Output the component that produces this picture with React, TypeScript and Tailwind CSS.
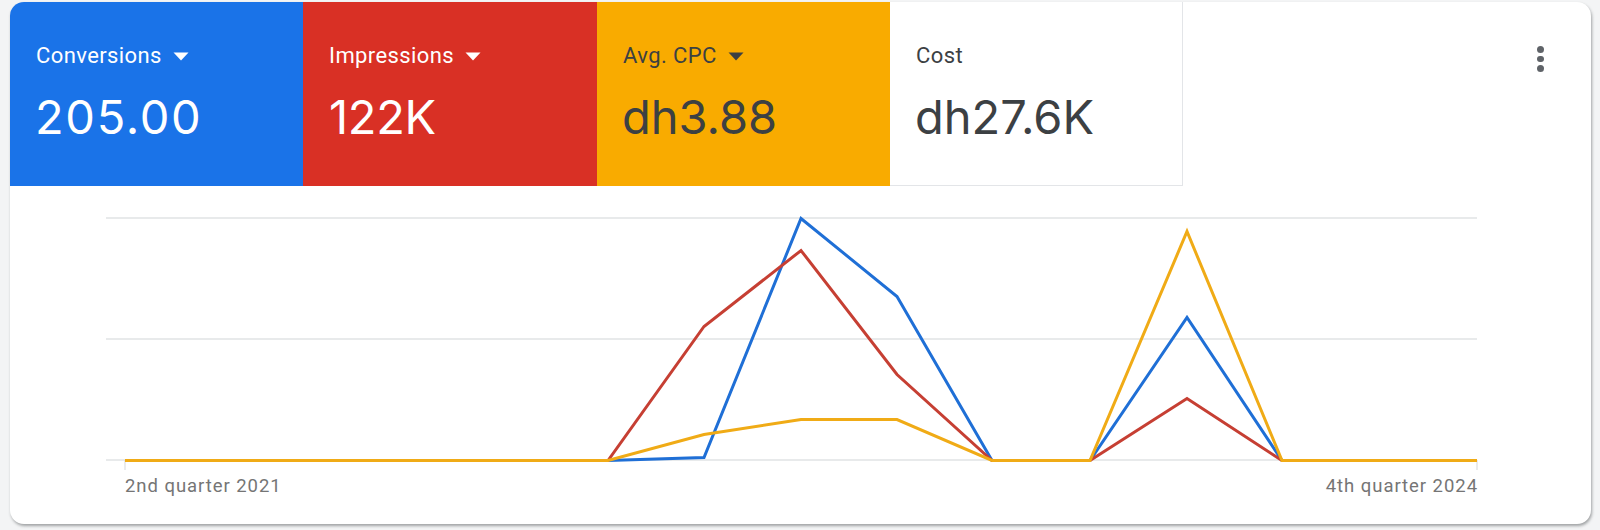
import React from "react";

const tiles = [
  { label: "Conversions", value: "205.00", bg: "bg-[#1a73e8] text-white", arrow: "#ffffff", w: "w-[293px] rounded-tl-[14px]", valueClass: "-ml-[1px] tracking-[1.7px]" },
  { label: "Impressions", value: "122K", bg: "bg-[#d93025] text-white", arrow: "#ffffff", w: "w-[294px]", valueClass: "tracking-[-0.3px]" },
  { label: "Avg. CPC", value: "dh3.88", bg: "bg-[#f9ab00] text-[#3c4043]", arrow: "#3c4043", w: "w-[293px]", valueClass: "-ml-[1px]" },
];

const xs = [125, 608, 704, 801, 897, 992, 1090, 1187, 1282, 1477];
const toPoints = (ys: number[]) => ys.map((y, i) => `${xs[i] - 106},${y - 209.5}`).join(" ");

function Tile({ label, value, bg, arrow, w, valueClass }: { label: string; value: string; bg: string; arrow?: string; w: string; valueClass: string }) {
  return (
    <div className={`${w} ${bg} h-[184px] pl-[26px] pt-[40px] shrink-0`}>
      <div className="flex items-center h-[28px] text-[22px] leading-[28px] tracking-[0.4px]">
        <span>{label}</span>
        {arrow && (
          <svg width="16" height="9" viewBox="0 0 16 9" className="ml-[11px]">
            <path d="M0.5 0.5H15.5L8 8.5Z" fill={arrow} />
          </svg>
        )}
      </div>
      <div className={`mt-[17px] text-[47px] leading-[60px] [font-family:Inter,Roboto,sans-serif] ${valueClass}`}>{value}</div>
    </div>
  );
}

export default function App() {
  return (
    <div className="h-[530px] w-[1600px] bg-[#f3f4f5] pl-[10px] pt-[2px] overflow-hidden [font-family:Roboto,'Liberation_Sans',sans-serif]">
      <div className="relative h-[522px] w-[1581px] rounded-[14px] bg-white shadow-[1px_2px_3px_rgba(60,64,67,0.45)]">
        <div className="flex">
          {tiles.map((t) => (
            <Tile key={t.label} {...t} />
          ))}
          <div className="w-[293px] h-[184px] box-border border-r border-b border-[#e3e5e8] pl-[26px] pt-[40px] text-[#3c4043] shrink-0">
            <div className="h-[28px] text-[22px] leading-[28px] tracking-[0.4px]">Cost</div>
            <div className="-ml-[1px] mt-[17px] text-[47px] leading-[60px] [font-family:Inter,Roboto,sans-serif]">dh27.6K</div>
          </div>
          <div className="ml-auto mr-[47px] mt-[44px] flex flex-col gap-[3px] h-fit">
            <span className="w-[6.6px] h-[6.6px] rounded-full bg-[#5f6368]" />
            <span className="w-[6.6px] h-[6.6px] rounded-full bg-[#5f6368]" />
            <span className="w-[6.6px] h-[6.6px] rounded-full bg-[#5f6368]" />
          </div>
        </div>
        <div className="ml-[96px] mt-[24px] w-[1372px]">
          <svg width="1372" height="260" viewBox="0 0 1372 260" className="block">
            <g stroke="#e1e3e5" strokeWidth="1.5" fill="none">
              <line x1="0" x2="1371" y1="8" y2="8" />
              <line x1="0" x2="1371" y1="129" y2="129" />
              <line x1="0" x2="1371" y1="250" y2="250" />
            </g>
            <g stroke="#d5d7d9" strokeWidth="1" fill="none">
              <line x1="19" x2="19" y1="250" y2="260" />
              <line x1="1371" x2="1371" y1="250" y2="260" />
            </g>
            <g fill="none" strokeWidth="3" strokeLinejoin="miter">
              <polyline stroke="#1f6fd6" points={toPoints([460, 460, 457, 218, 296, 460, 460, 317, 460, 460])} />
              <polyline stroke="#c63f33" points={toPoints([460, 460, 326, 250, 374, 460, 460, 398, 460, 460])} />
              <polyline stroke="#f0ab16" points={toPoints([460, 460, 434, 419, 419, 460, 460, 231, 460, 460])} />
            </g>
          </svg>
          <div className="flex justify-between pl-[19px] mt-[4px] text-[18.5px] leading-[24px] tracking-[0.95px] text-[#757575]">
            <span>2nd quarter 2021</span>
            <span>4th quarter 2024</span>
          </div>
        </div>
      </div>
    </div>
  );
}
